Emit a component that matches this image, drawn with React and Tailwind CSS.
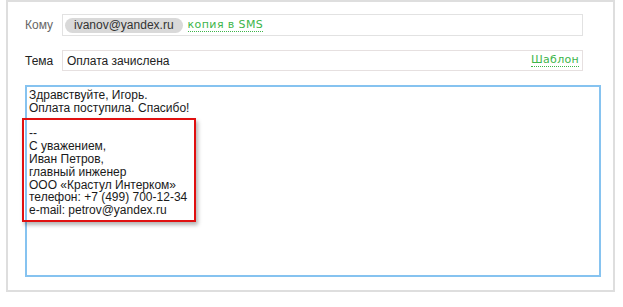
import React from 'react';

const font = { fontFamily: '"Liberation Sans", Arial, sans-serif' };
const linkFont = { fontFamily: '"DejaVu Sans", Verdana, sans-serif' };

const App = () => {
    return (
        <div className="w-[623px] h-[307px] bg-white" style={font}>
            <div className="ml-[6px] w-[609px] h-[292px] border-2 border-[#dedede] pt-[12px] pl-[17px] pr-[12px] pb-[13px] flex flex-col">
                {/* Кому */}
                <div className="flex items-center h-[22px] pr-[18px]">
                    <div className="w-[37px] text-[12px] text-[#666]">Кому</div>
                    <div className="flex-1 h-[22px] border border-[#e2e2e2] flex items-center pl-[2px]">
                        <span className="h-[15px] rounded-full bg-[#d9d9d9] px-[9px] flex items-center text-[12px] text-[#333] leading-none">
                            ivanov@yandex.ru
                        </span>
                        <span className="ml-[5px] text-[11px] tracking-[0.4px] text-[#3db54a] border-b border-dotted border-[#3db54a] leading-[12px]" style={linkFont}>
                            копия в SMS
                        </span>
                    </div>
                </div>

                {/* Тема */}
                <div className="flex items-center h-[21px] mt-[14px] pr-[18px]">
                    <div className="w-[37px] text-[12px] text-[#222]">Тема</div>
                    <div className="flex-1 h-[21px] border border-[#e6e0e0] flex items-center justify-between pl-[4px] pr-[3px]">
                        <span className="text-[12px] text-[#222]">Оплата зачислена</span>
                        <span className="text-[11px] tracking-[0.3px] text-[#3db54a] border-b border-dotted border-[#3db54a] leading-[12px]" style={linkFont}>
                            Шаблон
                        </span>
                    </div>
                </div>

                {/* Текст письма */}
                <div className="relative mt-[14px] flex-1 border-2 border-[#86c3f0] pt-[2px] pl-[2px] text-[12px] leading-[12.8px] text-[#1a1a1a]">
                    <p>Здравствуйте, Игорь.</p>
                    <p>Оплата поступила. Спасибо!</p>
                    <p>&nbsp;</p>
                    <p>--</p>
                    <p>С уважением,</p>
                    <p>Иван Петров,</p>
                    <p>главный инженер</p>
                    <p>ООО «Крастул Интерком»</p>
                    <p>телефон: +7 (499) 700-12-34</p>
                    <p>e-mail: petrov@yandex.ru</p>

                    {/* рамка подписи */}
                    <div className="absolute left-[-5px] top-[31px] w-[174px] h-[104px] border-2 border-[#e01010] shadow-[2px_3px_4px_rgba(0,0,0,0.3)]"></div>
                </div>
            </div>
        </div>
    );
};

export default App;
